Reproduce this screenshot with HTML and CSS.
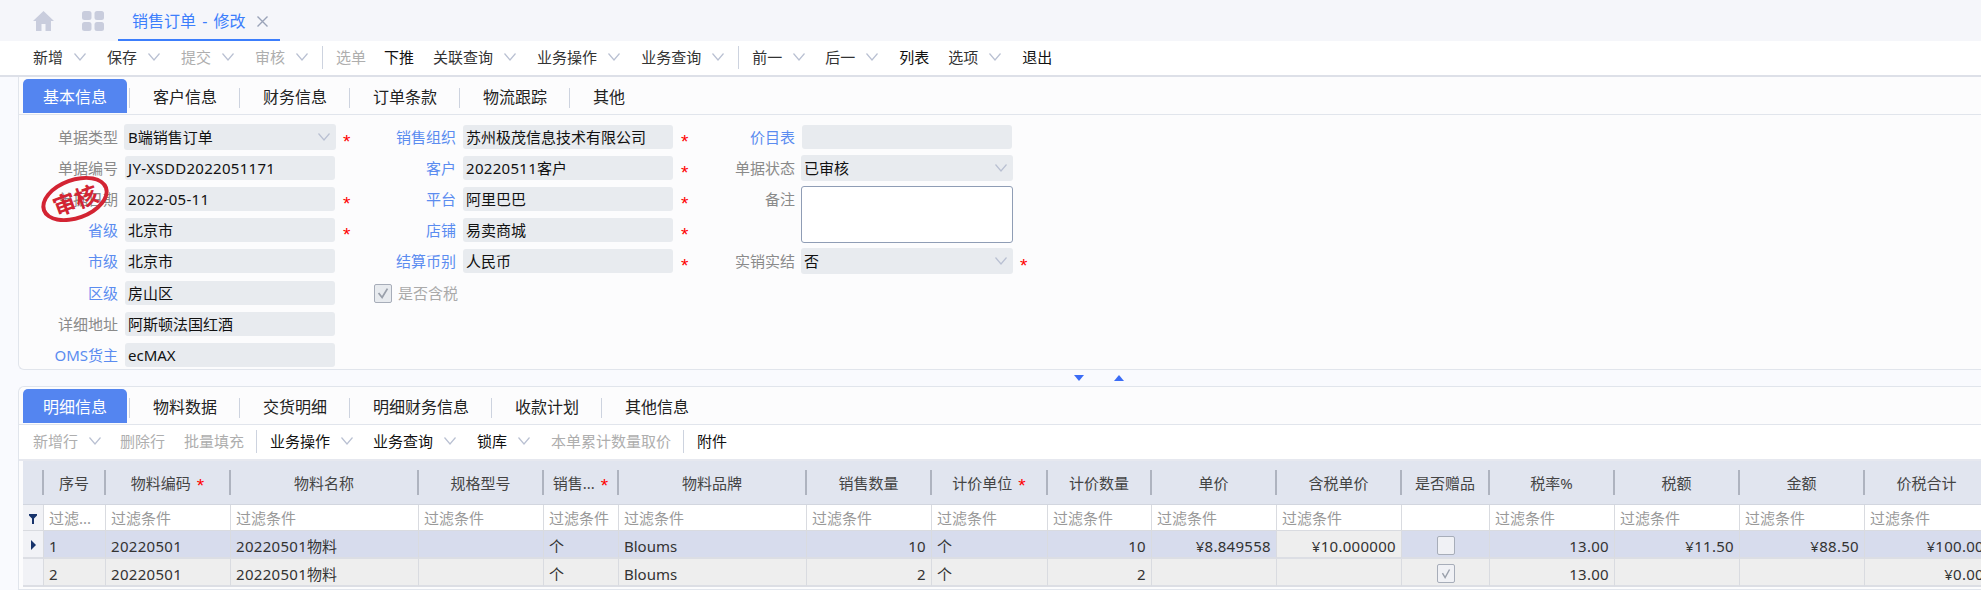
FILE: index.html
```html
<!DOCTYPE html>
<html lang="zh-CN">
<head>
<meta charset="utf-8">
<title>销售订单 - 修改</title>
<link rel="stylesheet" href="styles.css">
</head>
<body>
<svg class="defs" width="0" height="0"><defs>
<symbol id="chev" viewBox="0 0 12 8"><polyline points="0.5,0.5 6,7 11.5,0.5" fill="none" stroke="currentColor" stroke-width="1.2"/></symbol>
</defs></svg>

<header class="topbar">
  <svg class="nav-ico home" viewBox="0 0 21 20"><path d="M10.5 0 L21 10 L18 10 L18 20 L12.5 20 L12.5 13 L8.5 13 L8.5 20 L3 20 L3 10 L0 10 Z"/></svg>
  <svg class="nav-ico grid-ico" viewBox="0 0 22 20"><rect x="0" y="0" width="9.5" height="9" rx="2.5"/><rect x="12.5" y="0" width="9.5" height="9" rx="2.5"/><rect x="0" y="11" width="9.5" height="9" rx="2.5"/><rect x="12.5" y="11" width="9.5" height="9" rx="2.5"/></svg>
  <div class="page-tab"><span class="page-title">销售订单 - 修改</span><svg class="close" viewBox="0 0 11 11"><path d="M0.5 0.5 L10.5 10.5 M10.5 0.5 L0.5 10.5" fill="none" stroke="currentColor" stroke-width="1.4"/></svg></div>
</header>

<nav class="toolbar main-tb">
  <span class="tb">新增<svg class="chev"><use href="#chev"/></svg></span>
  <span class="tb">保存<svg class="chev"><use href="#chev"/></svg></span>
  <span class="tb off">提交<svg class="chev"><use href="#chev"/></svg></span>
  <span class="tb off">审核<svg class="chev"><use href="#chev"/></svg></span>
  <i class="sep"></i>
  <span class="tb off">选单</span>
  <span class="tb dark">下推</span>
  <span class="tb">关联查询<svg class="chev"><use href="#chev"/></svg></span>
  <span class="tb">业务操作<svg class="chev"><use href="#chev"/></svg></span>
  <span class="tb">业务查询<svg class="chev"><use href="#chev"/></svg></span>
  <i class="sep"></i>
  <span class="tb">前一<svg class="chev"><use href="#chev"/></svg></span>
  <span class="tb">后一<svg class="chev"><use href="#chev"/></svg></span>
  <span class="tb dark">列表</span>
  <span class="tb">选项<svg class="chev"><use href="#chev"/></svg></span>
  <span class="tb dark">退出</span>
</nav>

<main class="content">
  <section class="panel top-panel">
    <div class="tabs">
      <span class="tab active">基本信息</span>
      <span class="tab">客户信息</span>
      <span class="tab">财务信息</span>
      <span class="tab">订单条款</span>
      <span class="tab">物流跟踪</span>
      <span class="tab last">其他</span>
    </div>
    <div class="form">
      <div class="stamp"><span class="stamp-text">审核</span></div>

      <div class="col col1">
        <div class="fld"><label>单据类型</label><div class="ctl sel">B端销售订单<svg class="chev"><use href="#chev"/></svg></div><b class="req">*</b></div>
        <div class="fld"><label>单据编号</label><div class="ctl"><span class="n">JY-XSDD2022051171</span></div></div>
        <div class="fld"><label>单据日期</label><div class="ctl"><span class="n">2022-05-11</span></div><b class="req">*</b></div>
        <div class="fld"><label class="link">省级</label><div class="ctl">北京市</div><b class="req">*</b></div>
        <div class="fld"><label class="link">市级</label><div class="ctl">北京市</div></div>
        <div class="fld"><label class="link">区级</label><div class="ctl">房山区</div></div>
        <div class="fld"><label>详细地址</label><div class="ctl">阿斯顿法国红酒</div></div>
        <div class="fld"><label class="link">OMS货主</label><div class="ctl">ecMAX</div></div>
      </div>

      <div class="col col2">
        <div class="fld"><label class="link">销售组织</label><div class="ctl">苏州极茂信息技术有限公司</div><b class="req">*</b></div>
        <div class="fld"><label class="link">客户</label><div class="ctl"><span class="n">20220511</span>客户</div><b class="req">*</b></div>
        <div class="fld"><label class="link">平台</label><div class="ctl">阿里巴巴</div><b class="req">*</b></div>
        <div class="fld"><label class="link">店铺</label><div class="ctl">易卖商城</div><b class="req">*</b></div>
        <div class="fld"><label class="link">结算币别</label><div class="ctl">人民币</div><b class="req">*</b></div>
        <div class="fld check-fld"><span class="box on form-box"><svg viewBox="0 0 18 19"><polyline points="4,9 8,14 14,4" fill="none" stroke="currentColor" stroke-width="2"/></svg></span><span class="check-label">是否含税</span></div>
      </div>

      <div class="col col3">
        <div class="fld"><label class="link">价目表</label><div class="ctl"></div></div>
        <div class="fld"><label>单据状态</label><div class="ctl sel">已审核<svg class="chev"><use href="#chev"/></svg></div></div>
        <div class="fld tall"><label>备注</label><div class="ctl area"></div></div>
        <div class="fld"><label>实销实结</label><div class="ctl sel">否<svg class="chev"><use href="#chev"/></svg></div><b class="req">*</b></div>
      </div>
    </div>
  </section>

  <div class="splitter">
    <svg class="arrow" viewBox="0 0 10 6"><path d="M0 0 H10 L5 6 Z"/></svg>
    <svg class="arrow" viewBox="0 0 10 6"><path d="M5 0 L10 6 H0 Z"/></svg>
  </div>

  <section class="panel bottom-panel">
    <div class="tabs">
      <span class="tab active">明细信息</span>
      <span class="tab">物料数据</span>
      <span class="tab">交货明细</span>
      <span class="tab">明细财务信息</span>
      <span class="tab">收款计划</span>
      <span class="tab last">其他信息</span>
    </div>
    <nav class="toolbar sub-tb">
      <span class="tb off first">新增行<svg class="chev"><use href="#chev"/></svg></span>
      <span class="tb off">删除行</span>
      <span class="tb off">批量填充</span>
      <i class="sep"></i>
      <span class="tb dark">业务操作<svg class="chev"><use href="#chev"/></svg></span>
      <span class="tb dark">业务查询<svg class="chev"><use href="#chev"/></svg></span>
      <span class="tb dark">锁库<svg class="chev"><use href="#chev"/></svg></span>
      <span class="tb off">本单累计数量取价</span>
      <i class="sep"></i>
      <span class="tb dark">附件</span>
    </nav>
    <table class="grid">
      <colgroup>
        <col class="w21"><col class="w62"><col class="w125"><col class="w188"><col class="w125"><col class="w75"><col class="w188"><col class="w125"><col class="w116"><col class="w104"><col class="w125"><col class="w125"><col class="w88"><col class="w125"><col class="w125"><col class="w125"><col class="w125">
      </colgroup>
      <thead>
        <tr>
          <th><div></div></th>
          <th><div>序号</div></th>
          <th><div>物料编码<b class="req">*</b></div></th>
          <th><div>物料名称</div></th>
          <th><div>规格型号</div></th>
          <th><div>销售...<b class="req">*</b></div></th>
          <th><div>物料品牌</div></th>
          <th><div>销售数量</div></th>
          <th><div>计价单位<b class="req">*</b></div></th>
          <th><div>计价数量</div></th>
          <th><div>单价</div></th>
          <th><div>含税单价</div></th>
          <th><div>是否赠品</div></th>
          <th><div>税率%</div></th>
          <th><div>税额</div></th>
          <th><div>金额</div></th>
          <th><div>价税合计</div></th>
        </tr>
        <tr class="filter">
          <td class="handle"><svg class="funnel" viewBox="0 0 8 10"><path d="M0 0 H8 V1.5 L5 4.5 V10 H3 V4.5 L0 1.5 Z"/></svg></td>
          <td>过滤...</td><td>过滤条件</td><td>过滤条件</td><td>过滤条件</td><td>过滤条件</td><td>过滤条件</td><td>过滤条件</td><td>过滤条件</td><td>过滤条件</td><td>过滤条件</td><td>过滤条件</td><td></td><td>过滤条件</td><td>过滤条件</td><td>过滤条件</td><td>过滤条件</td>
        </tr>
      </thead>
      <tbody>
        <tr class="selected">
          <td class="handle"><svg class="caret" viewBox="0 0 5 10"><path d="M0 0 L5 5 L0 10 Z"/></svg></td>
          <td class="idx"><span class="n">1</span></td><td><span class="n">20220501</span></td><td><span class="n">20220501</span>物料</td><td></td><td>个</td><td>Bloums</td><td class="r"><span class="n">10</span></td><td>个</td><td class="r"><span class="n">10</span></td><td class="r"><span class="n">¥8.849558</span></td><td class="r plain"><span class="n">¥10.000000</span></td>
          <td class="c"><span class="box"></span></td>
          <td class="r"><span class="n">13.00</span></td><td class="r"><span class="n">¥11.50</span></td><td class="r"><span class="n">¥88.50</span></td><td class="r"><span class="n">¥100.00</span></td>
        </tr>
        <tr>
          <td class="handle"></td>
          <td class="idx"><span class="n">2</span></td><td><span class="n">20220501</span></td><td><span class="n">20220501</span>物料</td><td></td><td>个</td><td>Bloums</td><td class="r"><span class="n">2</span></td><td>个</td><td class="r"><span class="n">2</span></td><td></td><td></td>
          <td class="c"><span class="box on"><svg viewBox="0 0 18 19"><polyline points="5,9 8,14 13,5" fill="none" stroke="currentColor" stroke-width="1.6"/></svg></span></td>
          <td class="r"><span class="n">13.00</span></td><td></td><td></td><td class="r"><span class="n">¥0.00</span></td>
        </tr>
      </tbody>
    </table>
  </section>
</main>
</body>
</html>
```

FILE: styles.css
```css
* { box-sizing: border-box; }
html, body { margin: 0; height: 590px; overflow: hidden; }
body {
  width: 1981px;
  background: #f9fafe;
  color: #333;
  font: 15px/24px "Noto Sans", "Noto Sans CJK SC", sans-serif;
}
.defs { display: block; height: 0; }

/* top bar */
.topbar { display: flex; align-items: flex-start; height: 41px; background: #f5f6fa; }
.nav-ico { fill: #c9cddd; display: block; margin-top: 11px; }
.home { width: 21px; height: 20px; margin-left: 33px; }
.grid-ico { width: 22px; height: 20px; margin-left: 28px; }
.page-tab { display: flex; height: 41px; width: 162px; margin-left: 14px; padding-left: 14px; border-bottom: 2px solid #3c7efc; align-items: flex-start; }
.page-title { color: #3c7efc; font-size: 16px; line-height: 22px; margin-top: 10px; word-spacing: 2px; white-space: nowrap; }
.close { width: 11px; height: 11px; margin: 16px 0 0 12px; color: #9aa3b8; }

/* toolbars */
.toolbar { display: flex; align-items: center; gap: 19px; background: #fff; white-space: nowrap; }
.main-tb { height: 36px; padding: 0 0 2px 33px; border-bottom: 2px solid #dde0e8; }
.sub-tb { height: 36px; padding: 0 0 2px 14px; border-bottom: 2px solid #e6e8ef; }
.tb { display: flex; align-items: center; color: #333; }
.tb.off { color: #aeaeae; }
.tb.dark { color: #111; }
.chev { width: 12px; height: 8px; color: #b9c0d2; display: block; }
.tb .chev { margin: 0 2px 0 11px; }
.tb.first .chev { margin-right: 0; }
.sep { width: 1px; height: 23px; background: #cdd3df; margin: 0 -7px; flex: none; }
.sep + .tb { margin-left: 1px; margin-right: -1px; }

/* panels */
.content { padding-left: 18px; margin-right: -10px; }
.panel { background: #fcfcfd; border: 1px solid #e1e5ec; border-top: 0; border-right: 0; }
.top-panel { height: 293px; border-radius: 0 0 0 6px; border-bottom-width: 1px; }
.bottom-panel { border-top: 1px solid #e1e5ec; border-radius: 6px 0 0 0; height: 204px; }
.tabs { display: flex; height: 38px; padding: 2px 0 0 4px; border-bottom: 1px solid #e1e5ec; }
.tab { position: relative; height: 34px; line-height: 36px; font-size: 16px; color: #222; padding: 0 23px; white-space: nowrap; }
.tab::after { content: ""; position: absolute; right: 0; top: 9px; height: 20px; width: 1px; background: #cdd3df; }
.tab.last::after { display: none; }
.tab.active { width: 104px; padding: 0 20px; margin-right: 3px; background: #5485f0; color: #fff; border-radius: 5px 5px 0 0; }
.tab.active::after { right: -3px; }
.bottom-panel .tabs { height: 38px; }

/* form */
.form { position: relative; display: flex; padding-top: 10px; }
.col { display: grid; grid-template-rows: repeat(4, 24px) 25px repeat(3, 24px); row-gap: 7px; align-content: start; }
.col1 { width: 343px; }
.col2 { width: 345px; }
.fld { display: flex; align-items: center; height: 24px; }
.fld label { flex: none; text-align: right; color: #8a8a8a; line-height: 24px; margin-right: 7px; white-space: nowrap; }
.fld label.link { color: #5b8cf0; }
.col1 label { width: 99px; }
.col2 label { width: 94px; }
.col3 label { width: 88px; }
.ctl { position: relative; flex: none; width: 210px; height: 24px; background: #e8ebef; border-radius: 3px; padding-left: 3px; color: #111; line-height: 24px; white-space: nowrap; }
.sel { width: 212px; height: 26px; margin: 0 -1px; padding-left: 4px; line-height: 26px; }
.col3 .sel { padding-left: 3px; }
.sel .chev { position: absolute; right: 6px; top: 9px; }
.req { color: #f00; font: 400 19px/15px "Liberation Sans", sans-serif; margin: 8px 0 0 8px; }
.fld.tall { grid-row: span 2; height: 57px; align-items: flex-start; margin-top: -1px; }
.fld.tall label { margin-top: 1px; }
.area { width: 212px; height: 57px; margin: 0 -1px; background: #fff; border: 1px solid #8f9db5; border-radius: 3px; }
.col3 { grid-template-rows: repeat(2, 24px) 24px 24px 25px; }
.n { letter-spacing: .3px; }
.check-fld { padding-left: 12px; }
.box { display: inline-block; width: 18px; height: 19px; border: 1px solid #a7adb9; border-radius: 2px; background: #f0f1f5; vertical-align: middle; color: #9aa0ab; }
.box svg { display: block; width: 16px; height: 17px; }
.form-box { background: #e8ebef; }
.check-label { color: #aaa; margin-left: 6px; white-space: nowrap; }

/* stamp */
.stamp { position: absolute; left: 21px; top: 63px; width: 70px; height: 42px; border: 4px solid #d32433; border-radius: 50%; transform: rotate(-20deg); display: flex; align-items: center; justify-content: center; z-index: 1; }
.stamp-text { color: #d32433; font: 700 23px/24px "Noto Sans CJK SC", sans-serif; white-space: nowrap; }

/* splitter */
.splitter { display: flex; gap: 30px; height: 16px; padding: 5px 0 0 1056px; }
.arrow { width: 10px; height: 6px; fill: #3b6cf6; display: block; }

/* grid */
.grid { margin-left: 4px; table-layout: fixed; width: 1967px; border-collapse: separate; border-spacing: 0; color: #333; }
.w21 { width: 21px; } .w62 { width: 62px; } .w75 { width: 75px; } .w88 { width: 88px; } .w104 { width: 104px; } .w116 { width: 116px; } .w125 { width: 125px; } .w188 { width: 188px; }
.grid th { height: 44px; padding: 0; background: #e1e5ef; border-bottom: 1px solid #d2d6df; font-weight: 400; color: #444; }
.grid th div { display: flex; align-items: center; justify-content: center; height: 25px; border-right: 2px solid #aeb3bf; white-space: nowrap; }
.grid th .req { margin: 6px 0 0 6px; }
.grid td { height: 28px; padding: 4px 5px 0; line-height: 20px; background: #eee; border-right: 1px solid #d9dbe0; border-bottom: 2px solid #dcdee4; white-space: nowrap; overflow: hidden; }
.grid .filter td { height: 26px; padding-top: 0; line-height: 24px; background: #fff; color: #999; border-bottom: 1px solid #d9dbe0; }
.grid .selected td { background: #d7dced; }
.grid .selected td.plain { background: #eee; }
.grid td.handle, .grid .selected td.handle, .grid .filter td.handle { background: #f1f2f6; padding: 0; text-align: center; }
.grid td.idx { padding-left: 5px; }
.grid td.r { text-align: right; }
.grid td.c { text-align: center; padding: 0; }
.funnel { width: 8px; height: 10px; fill: #17336b; display: inline-block; vertical-align: middle; }
.caret { width: 5px; height: 10px; fill: #17336b; display: inline-block; vertical-align: middle; margin-bottom: 2px; }
```
